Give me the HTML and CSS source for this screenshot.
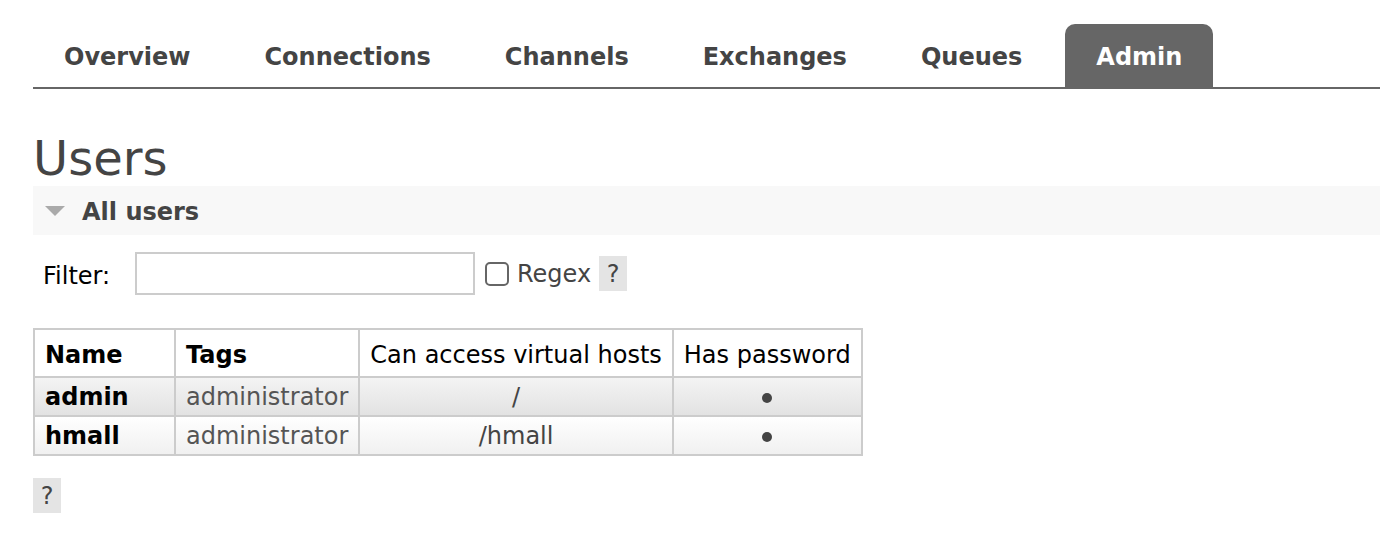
FILE: index.html
```html
<!DOCTYPE html>
<html>
<head>
<meta charset="utf-8">
<link rel="stylesheet" href="styles.css">
</head>
<body>
<div class="page">
  <ul class="tabs">
    <li class="tab">Overview</li>
    <li class="tab">Connections</li>
    <li class="tab">Channels</li>
    <li class="tab">Exchanges</li>
    <li class="tab">Queues</li>
    <li class="tab active">Admin</li>
  </ul>
  <h1 class="title">Users</h1>
  <div class="section-head">
    <span class="tri"></span>
    <span class="section-title">All users</span>
  </div>
  <div class="filter">
    <span class="filter-label">Filter:</span>
    <input class="filter-input" type="text">
    <span class="check"></span>
    <span class="regex">Regex</span>
    <span class="help">?</span>
  </div>
  <table class="users">
    <thead>
      <tr>
        <th class="c-name">Name</th>
        <th class="c-tags">Tags</th>
        <th class="c-vh">Can access virtual hosts</th>
        <th class="c-pw">Has password</th>
      </tr>
    </thead>
    <tbody>
      <tr class="alt1">
        <td class="name">admin</td>
        <td class="tags">administrator</td>
        <td class="ctr">/</td>
        <td class="ctr"><span class="dot"></span></td>
      </tr>
      <tr class="alt2">
        <td class="name">hmall</td>
        <td class="tags">administrator</td>
        <td class="ctr">/hmall</td>
        <td class="ctr"><span class="dot"></span></td>
      </tr>
    </tbody>
  </table>
  <div class="bottom-help"><span class="help">?</span></div>
</div>
</body>
</html>
```
FILE: styles.css
```css
html, body {
  margin: 0;
  padding: 0;
  background: #fff;
}
body {
  font-family: "DejaVu Sans", Verdana, sans-serif;
  color: #000;
}
.page {
  padding: 24px 0 0 33px;
}
.tabs {
  list-style: none;
  margin: 0;
  padding: 0;
  display: flex;
  height: 63px;
  border-bottom: 2px solid #666;
}
.tab {
  padding: 0 31px;
  margin-right: 12px;
  font-size: 24px;
  font-weight: bold;
  color: #444;
  display: flex;
  align-items: center;
  padding-top: 2px;
  border-radius: 10px 10px 0 0;
}
.tab.active {
  background: #666;
  color: #fff;
}
.title {
  margin: 0;
  padding-top: 40px;
  font-size: 48px;
  font-weight: normal;
  color: #444;
  line-height: 58px;
  height: 57px;
}
.section-head {
  background: #f8f8f8;
  height: 49px;
  display: flex;
  align-items: center;
  padding-left: 12px;
}
.tri {
  width: 0;
  height: 0;
  border-left: 10px solid transparent;
  border-right: 10px solid transparent;
  border-top: 10px solid #aaa;
  margin-right: 17px;
}
.section-title {
  font-size: 24px;
  font-weight: bold;
  color: #444;
  padding-top: 2px;
}
.filter {
  display: flex;
  align-items: center;
  margin-top: 17px;
  height: 43px;
}
.filter-label {
  font-size: 24px;
  color: #000;
  margin-left: 10px;
  width: 92px;
  padding-top: 4px;
}
.filter-input {
  box-sizing: border-box;
  width: 340px;
  height: 43px;
  border: 2px solid #ccc;
  margin: 0;
  padding: 0;
}
.check {
  box-sizing: border-box;
  width: 24px;
  height: 24px;
  border: 2px solid #666;
  border-radius: 5px;
  margin-left: 10px;
  margin-right: 8px;
}
.regex {
  font-size: 24px;
  color: #444;
  margin-right: 8px;
}
.help {
  display: inline-flex;
  align-items: center;
  justify-content: center;
  width: 28px;
  height: 35px;
  background: #e4e4e4;
  color: #444;
  font-size: 24px;
}
.users {
  border-collapse: collapse;
  margin-top: 33px;
  font-size: 24px;
}
.users th, .users td {
  border: 2px solid #ccc;
  padding: 0 10px;
  white-space: nowrap;
}
.users th {
  height: 43px;
  text-align: left;
  font-weight: normal;
  padding-top: 3px;
}
.users th.c-name, .users th.c-tags {
  font-weight: bold;
}
.c-name { width: 119px; }
.c-tags { width: 162px; }
.c-vh { width: 290px; }
.c-pw { width: 167px; }
.users td {
  height: 37px;
}
.users td.name {
  font-weight: bold;
}
.users td.tags {
  color: #555;
}
.users td.ctr {
  text-align: center;
  color: #444;
}
.dot {
  display: inline-block;
  width: 10px;
  height: 10px;
  border-radius: 50%;
  background: #444;
  vertical-align: middle;
}
.alt1 {
  background: linear-gradient(#f4f4f4, #e2e2e2);
}
.alt2 {
  background: linear-gradient(#ffffff, #f0f0f0);
}
.bottom-help {
  margin-top: 22px;
}
```
